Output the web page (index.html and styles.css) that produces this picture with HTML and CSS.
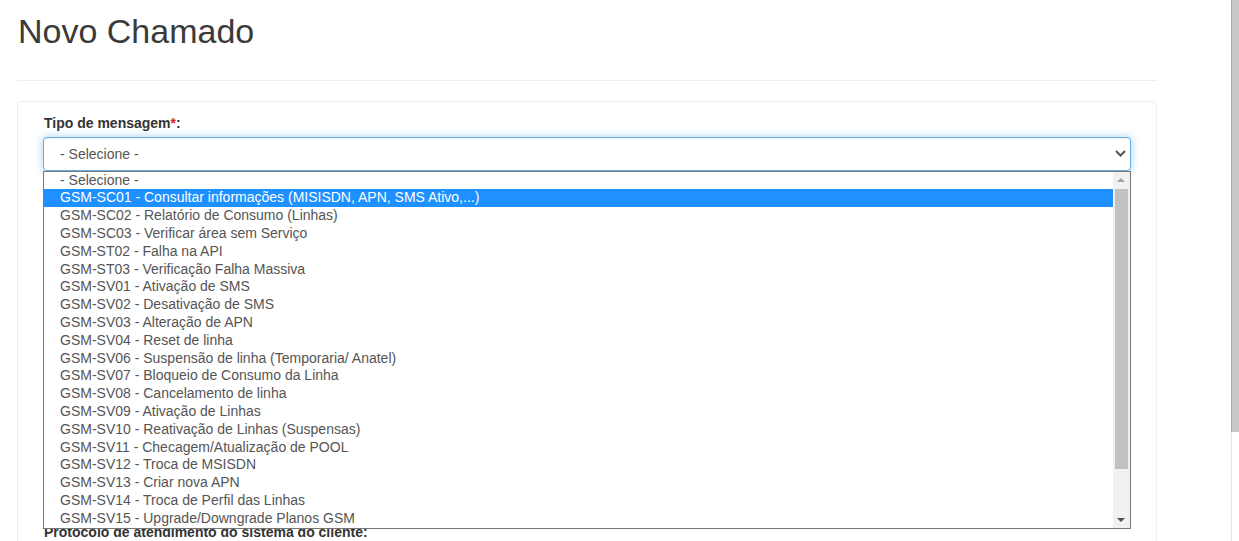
FILE: index.html
```html
<!DOCTYPE html>
<html lang="pt-BR">
<head>
  <meta charset="UTF-8" />
  <title>Novo Chamado</title>
  <link rel="stylesheet" href="styles.css">
</head>
<body>
  <div class="container">
    <div class="page-header"><h1>Novo Chamado</h1></div>
    <div class="panel">
      <div class="form-group">
        <label>Tipo de mensagem<span class="req">*</span>:</label>
        <div class="select-wrap">
          <div class="form-control select-box">
            <span>- Selecione -</span>
            <svg class="chevron" width="11" height="7" viewBox="0 0 11 7"><path d="M1 1 L5.5 5.5 L10 1" fill="none" stroke="#555" stroke-width="2"/></svg>
          </div>
          <div class="dropdown">
            <ul class="options">
              <li>- Selecione -</li>
              <li class="hl">GSM-SC01 - Consultar informações (MISISDN, APN, SMS Ativo,...)</li>
              <li>GSM-SC02 - Relatório de Consumo (Linhas)</li>
              <li>GSM-SC03 - Verificar área sem Serviço</li>
              <li>GSM-ST02 - Falha na API</li>
              <li>GSM-ST03 - Verificação Falha Massiva</li>
              <li>GSM-SV01 - Ativação de SMS</li>
              <li>GSM-SV02 - Desativação de SMS</li>
              <li>GSM-SV03 - Alteração de APN</li>
              <li>GSM-SV04 - Reset de linha</li>
              <li>GSM-SV06 - Suspensão de linha (Temporaria/ Anatel)</li>
              <li>GSM-SV07 - Bloqueio de Consumo da Linha</li>
              <li>GSM-SV08 - Cancelamento de linha</li>
              <li>GSM-SV09 - Ativação de Linhas</li>
              <li>GSM-SV10 - Reativação de Linhas (Suspensas)</li>
              <li>GSM-SV11 - Checagem/Atualização de POOL</li>
              <li>GSM-SV12 - Troca de MSISDN</li>
              <li>GSM-SV13 - Criar nova APN</li>
              <li>GSM-SV14 - Troca de Perfil das Linhas</li>
              <li>GSM-SV15 - Upgrade/Downgrade Planos GSM</li>
            </ul>
            <div class="sb">
              <div class="sb-up"></div>
              <div class="sb-thumb"></div>
              <div class="sb-down"></div>
            </div>
          </div>
        </div>
      </div>
      <div class="form-group">
        <label>Descrição<span class="req">*</span>:</label>
        <textarea class="form-control desc"></textarea>
      </div>
      <div class="form-group">
        <label>Protocolo de atendimento do sistema do cliente:</label>
        <input type="text" class="form-control">
      </div>
    </div>
  </div>
  <div class="page-scroll"><div class="page-thumb"></div></div>
</body>
</html>
```

FILE: styles.css
```css
html, body { margin: 0; height: 100%; overflow: hidden; }
body { font-family: "Liberation Sans", Arial, sans-serif; font-size: 14px; line-height: 20px; color: #333; background: #fff; }
.container { width: 1140px; margin-left: 17px; }
.page-header { padding: 12px 0 28px; border-bottom: 1px solid #eee; margin-bottom: 20px; }
.page-header h1 { margin: 0; font-size: 34px; font-weight: normal; line-height: 39.6px; padding-left: 1px; color: #3a3a3a; }
.panel { border: 1px solid #eee; border-radius: 4px; padding: 11px 25px 0; height: 600px; }
.form-group { margin-bottom: 15px; }
label { display: block; font-weight: bold; margin-bottom: 4px; padding-left: 1px; }
.req { color: #e02020; }
.form-control { display: block; box-sizing: border-box; width: 100%; height: 34px; padding: 6px 12px; font: inherit; color: #555; border: 1px solid #ccc; border-radius: 4px; background: #fff; }
.select-wrap { position: relative; }
.select-box { display: flex; align-items: center; justify-content: space-between; padding-left: 16px; padding-right: 4px; border-color: #66afe9; box-shadow: inset 0 1px 1px rgba(0,0,0,.075), 0 0 8px rgba(102,175,233,.6); }
.desc { height: 297px; resize: none; }
.dropdown { position: absolute; top: 100%; left: 0; right: 0; display: flex; background: #fff; border: 1px solid #767676; z-index: 5; }
.options { flex: 1; list-style: none; margin: 0; padding: 0; color: #555; }
.options li { height: 17.8px; line-height: 17.8px; padding-left: 16px; white-space: nowrap; }
.options li.hl { background: #1e90ff; color: #fff; }
.sb { width: 17px; background: #f1f1f1; position: relative; }
.sb-up, .sb-down { position: absolute; left: 4px; width: 0; height: 0; border-left: 4px solid transparent; border-right: 4px solid transparent; }
.sb-up { top: 6px; border-bottom: 4px solid #a3a3a3; }
.sb-down { bottom: 6px; border-top: 4px solid #505050; }
.sb-thumb { position: absolute; left: 2px; right: 2px; top: 17px; height: 280px; background: #c1c1c1; }
.page-scroll { position: fixed; top: 0; right: 0; bottom: 0; width: 7px; border-left: 1px solid #e4e4e4; background: #fff; }
.page-thumb { height: 432px; background: #c9c9c9; border-left: 1px solid #a9a9a9; margin-left: -1px; }
```
